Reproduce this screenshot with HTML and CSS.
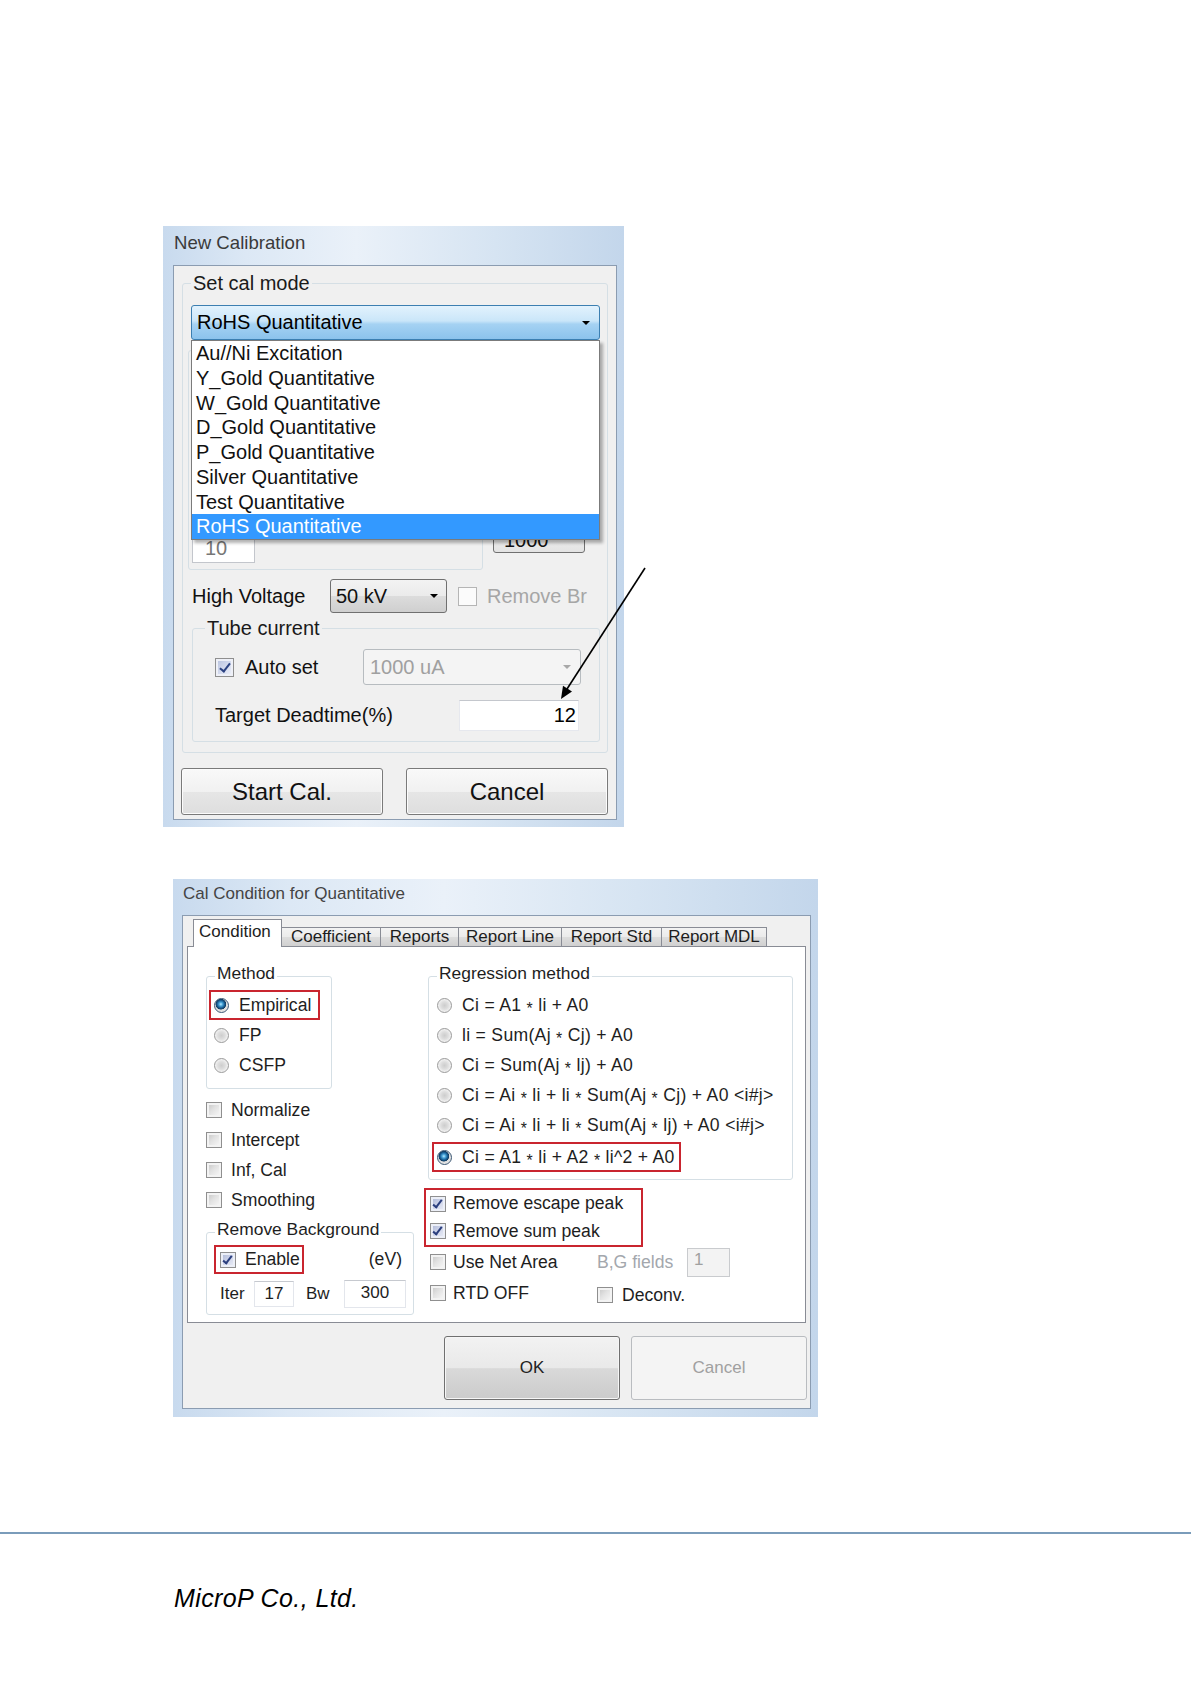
FILE: index.html
```html
<!DOCTYPE html>
<html lang="en">
<head>
<meta charset="utf-8">
<title>MicroP - Calibration</title>
<link rel="stylesheet" href="styles.css">
</head>
<body>
<main class="page">

  <div class="fig fig1">
    <section class="dlg dlg1">
      <div class="dlg-title dlg1-title">New Calibration</div>
      <div class="dlg-panel dlg1-panel">
        <fieldset class="grp grp-setcal">
          <legend>Set cal mode</legend>
          <div class="combo-wrap">
            <div class="combo combo-main"><span class="combo-text">RoHS Quantitative</span><i class="caret"></i></div>
            <ul class="droplist">
              <li>Au//Ni Excitation</li>
              <li>Y_Gold Quantitative</li>
              <li>W_Gold Quantitative</li>
              <li>D_Gold Quantitative</li>
              <li>P_Gold Quantitative</li>
              <li>Silver Quantitative</li>
              <li>Test Quantitative</li>
              <li class="sel">RoHS Quantitative</li>
            </ul>
          </div>
          <div class="hidden-row">
            <div class="grp-inner"><div class="txt10">10</div></div>
            <div class="btn-hidden">1000</div>
          </div>
          <div class="hv-row">
            <span class="hv-label">High Voltage</span>
            <div class="combo combo-hv"><span class="combo-text">50 kV</span><i class="caret"></i></div>
            <span class="chk1 dis"></span><span class="lbl-dis">Remove Br</span>
          </div>
          <fieldset class="grp grp-tube">
            <legend>Tube current</legend>
            <div class="auto-row">
              <span class="chk1 on"></span><span class="auto-label">Auto set</span>
              <div class="combo combo-dis"><span class="combo-text">1000 uA</span><i class="caret caret-dis"></i></div>
            </div>
            <div class="dead-row">
              <span>Target Deadtime(%)</span>
              <div class="txt-dead">12</div>
            </div>
          </fieldset>
        </fieldset>
        <div class="btn-row1">
          <div class="btn1">Start Cal.</div>
          <div class="btn1">Cancel</div>
        </div>
      </div>
    </section>
    <svg class="pointer" viewBox="0 0 500 500" width="500" height="500" aria-hidden="true">
      <line x1="482" y1="342" x2="404" y2="463" stroke="#000" stroke-width="1.6"/>
      <polygon points="398,473 409,465.6 400,459.8" fill="#000"/>
    </svg>
  </div>

  <div class="fig fig2">
    <section class="dlg dlg2">
      <div class="dlg-title dlg2-title">Cal Condition for Quantitative</div>
      <div class="dlg-panel dlg2-panel">
        <div class="tabs">
          <div class="tab active t-cond">Condition</div>
          <div class="tab t-coef">Coefficient</div>
          <div class="tab t-rep">Reports</div>
          <div class="tab t-line">Report Line</div>
          <div class="tab t-std">Report Std</div>
          <div class="tab t-mdl">Report MDL</div>
        </div>
        <div class="tabpage">
          <div class="col-left">
            <fieldset class="grp2 grp-method">
              <legend>Method</legend>
              <div class="opt red"><span class="radio on"></span><span class="t">Empirical</span></div>
              <div class="opt"><span class="radio"></span><span class="t">FP</span></div>
              <div class="opt"><span class="radio"></span><span class="t">CSFP</span></div>
            </fieldset>
            <div class="chk-list">
              <div class="chk-row"><span class="cb"></span><span class="t">Normalize</span></div>
              <div class="chk-row"><span class="cb"></span><span class="t">Intercept</span></div>
              <div class="chk-row"><span class="cb"></span><span class="t">Inf, Cal</span></div>
              <div class="chk-row"><span class="cb"></span><span class="t">Smoothing</span></div>
            </div>
            <fieldset class="grp2 grp-bg">
              <legend>Remove Background</legend>
              <div class="bg-row1">
                <div class="opt red opt-enable"><span class="cb on"></span><span class="t">Enable</span></div>
                <span class="t">(eV)</span>
              </div>
              <div class="bg-row2">
                <span class="lbl-iter">Iter</span>
                <div class="fld fld-iter">17</div>
                <span class="lbl-bw">Bw</span>
                <div class="fld fld-bw">300</div>
              </div>
            </fieldset>
          </div>
          <div class="col-right">
            <fieldset class="grp2 grp-reg">
              <legend>Regression method</legend>
              <div class="opt"><span class="radio"></span><span class="t">Ci = A1 <span class="ast">*</span> li + A0</span></div>
              <div class="opt"><span class="radio"></span><span class="t">li = Sum(Aj <span class="ast">*</span> Cj) + A0</span></div>
              <div class="opt"><span class="radio"></span><span class="t">Ci = Sum(Aj <span class="ast">*</span> lj) + A0</span></div>
              <div class="opt"><span class="radio"></span><span class="t">Ci = Ai <span class="ast">*</span> li + li <span class="ast">*</span> Sum(Aj <span class="ast">*</span> Cj) + A0 &lt;i#j&gt;</span></div>
              <div class="opt"><span class="radio"></span><span class="t">Ci = Ai <span class="ast">*</span> li + li <span class="ast">*</span> Sum(Aj <span class="ast">*</span> lj) + A0 &lt;i#j&gt;</span></div>
              <div class="opt red opt-last"><span class="radio on"></span><span class="t">Ci = A1 <span class="ast">*</span> li + A2 <span class="ast">*</span> li^2 + A0</span></div>
            </fieldset>
            <div class="redgroup">
              <div class="chk-row r27"><span class="cb on cb-r"></span><span class="t">Remove escape peak</span></div>
              <div class="chk-row r28"><span class="cb on cb-r"></span><span class="t">Remove sum peak</span></div>
            </div>
            <div class="opt-grid">
              <div class="chk-row r28"><span class="cb cb-r"></span><span class="t">Use Net Area</span></div>
              <div class="chk-row r28"><span class="lbl-bgf">B,G fields</span><div class="fld-dis">1</div></div>
              <div class="chk-row r28"><span class="cb cb-r"></span><span class="t">RTD OFF</span></div>
              <div class="chk-row r28 deconv"><span class="cb"></span><span class="t">Deconv.</span></div>
            </div>
          </div>
        </div>
        <div class="btn-row2">
          <div class="btn2 ok">OK</div>
          <div class="btn2 dis">Cancel</div>
        </div>
      </div>
    </section>
  </div>

  <div class="rule"></div>
  <p class="footer-text">MicroP Co., Ltd.</p>
</main>
</body>
</html>
```

FILE: styles.css
```css
html, body {
  margin: 0;
  padding: 0;
  background: #fff;
}
body {
  font-family: "Liberation Sans", Arial, sans-serif;
  color: #111;
}
.page {
  padding-top: 226px;
}

/* ---------- dialog frame ---------- */
.dlg {
  box-sizing: border-box;
  background: linear-gradient(to right, #c8daee 0%, #dce8f5 18%, #eaf1f9 42%, #d6e4f2 72%, #c3d6eb 100%);
  display: flex;
  flex-direction: column;
}
.dlg-title {
  box-sizing: border-box;
  color: #3a3a3a;
  white-space: nowrap;
}
.dlg-panel {
  box-sizing: border-box;
  border: 1px solid #8b9cb1;
  background: #f0f0f0;
}

/* ---------- dialog 1 ---------- */
.fig1 {
  position: relative;
  margin-left: 163px;
  width: 461px;
}
.dlg1 {
  width: 461px;
  height: 601px;
  font-size: 20px;
}
.dlg1-title {
  height: 39px;
  line-height: 33px;
  padding-left: 11px;
  font-size: 18.6px;
}
.dlg1-panel {
  margin: 0 7px 0 10px;
  height: 555px;
}

.grp {
  margin: 0;
  padding: 0;
  border: 1px solid #d5dfe5;
  border-radius: 3px;
  box-sizing: border-box;
  min-width: 0;
}
.grp > legend {
  padding: 0 2px;
  font-size: 20px;
  line-height: 24px;
  color: #1a1a1a;
}
.grp-setcal {
  margin: 5px 0 0 8px;
  width: 426px;
  padding-bottom: 10px;
}
.grp-setcal > legend {
  margin-left: 8px;
}

.combo {
  display: flex;
  align-items: center;
  box-sizing: border-box;
  border-radius: 3px;
  white-space: nowrap;
}
.combo-text {
  flex: 1;
}
.caret {
  display: block;
  width: 0;
  height: 0;
  border-left: 4px solid transparent;
  border-right: 4px solid transparent;
  border-top: 4px solid #000;
}
.caret-dis {
  border-top-color: #a8a8a8;
}

.combo-wrap {
  position: relative;
  margin: 10px 0 0 8px;
  width: 409px;
}
.combo-main {
  height: 35px;
  border: 1px solid #3c7fb1;
  background: linear-gradient(#e2f2fd 0%, #cae6f9 45%, #a5d2f3 55%, #8cc3ec 100%);
  padding: 0 9px 0 5px;
  color: #000;
}
.droplist {
  position: absolute;
  top: 100%;
  left: 0;
  z-index: 2;
  box-sizing: border-box;
  width: 409px;
  margin: 0;
  padding: 0;
  list-style: none;
  background: #fff;
  border: 1px solid #7b7b7b;
  box-shadow: 3px 3px 3px rgba(0, 0, 0, 0.3);
}
.droplist li {
  height: 24.75px;
  line-height: 24.75px;
  padding-left: 4px;
  color: #111;
}
.droplist li.sel {
  background: #3399ff;
  color: #fff;
}

.hidden-row {
  display: flex;
  margin: 10px 0 0 5px;
  height: 220px;
}
.grp-inner {
  box-sizing: border-box;
  width: 295px;
  height: 220px;
  border: 1px solid #d5dfe5;
  border-radius: 3px;
  display: flex;
  flex-direction: column;
  justify-content: flex-end;
  padding: 0 0 6px 3px;
}
.txt10 {
  box-sizing: border-box;
  width: 63px;
  height: 26px;
  border: 1px solid #c3c6cc;
  background: #fff;
  color: #777;
  line-height: 20px;
  padding-left: 12px;
}
.btn-hidden {
  box-sizing: border-box;
  align-self: flex-end;
  margin: 0 0 17px 10px;
  width: 92px;
  height: 26px;
  border: 1px solid #707070;
  border-radius: 3px;
  background: linear-gradient(#f4f4f4, #e3e3e3);
  line-height: 24px;
  padding-left: 10px;
}

.hv-row {
  display: flex;
  align-items: center;
  margin-top: 9px;
  height: 34px;
  padding-left: 9px;
  white-space: nowrap;
}
.hv-label {
  width: 138px;
}
.combo-hv {
  width: 117px;
  height: 34px;
  border: 1px solid #707070;
  background: linear-gradient(#f3f3f3, #ebebeb 50%, #dcdcdc 51%, #cfcfcf);
  padding: 0 8px 0 5px;
}
.chk1 {
  position: relative;
  flex: none;
  box-sizing: border-box;
  width: 19px;
  height: 19px;
  border: 1px solid #8f8f8f;
  background: linear-gradient(135deg, #d0d0d0, #eeeeee 55%, #fff);
  box-shadow: inset 0 0 0 2px #f3f3f3;
}
.hv-row .chk1 {
  margin-left: 11px;
}
.chk1.dis {
  border-color: #b5b5b5;
  background: #fbfbfb;
  box-shadow: none;
}
.chk1.on {
  background: linear-gradient(135deg, #b5c0dd, #d6dcef 55%, #f1f3fa);
  box-shadow: inset 0 0 0 2px #eef0f7;
}
.chk1.on::after {
  content: "";
  position: absolute;
  left: 6px;
  top: 2px;
  width: 4px;
  height: 9px;
  border: solid #2c4382;
  border-width: 0 2px 2px 0;
  transform: rotate(38deg);
}
.lbl-dis {
  margin-left: 10px;
  color: #a6a6a6;
}

.grp-tube {
  margin: 3px 0 0 9px;
  width: 408px;
  padding-bottom: 10px;
}
.grp-tube > legend {
  margin-left: 12px;
}
.auto-row {
  display: flex;
  align-items: center;
  height: 36px;
  margin-top: 9px;
  padding-left: 22px;
  white-space: nowrap;
}
.auto-label {
  margin-left: 11px;
}
.combo-dis {
  margin-left: auto;
  margin-right: 18px;
  width: 218px;
  height: 36px;
  border: 1px solid #b7bcc0;
  background: #f4f4f4;
  color: #a0a0a0;
  padding: 0 9px 0 6px;
}
.dead-row {
  display: flex;
  align-items: center;
  height: 31px;
  margin-top: 15px;
  padding-left: 22px;
  white-space: nowrap;
}
.txt-dead {
  box-sizing: border-box;
  margin-left: auto;
  margin-right: 20px;
  width: 120px;
  height: 31px;
  background: #fff;
  border: 1px solid #e6e8ee;
  border-top-color: #c4c7cd;
  text-align: right;
  padding-right: 2px;
  line-height: 29px;
  color: #000;
}

.btn-row1 {
  display: flex;
  gap: 23px;
  margin: 15px 0 0 7px;
}
.btn1 {
  box-sizing: border-box;
  width: 202px;
  height: 47px;
  border: 1px solid #7a7a7a;
  border-radius: 3px;
  background: linear-gradient(#f9f9f9, #f1f1f1 50%, #e6e6e6 51%, #dedede);
  box-shadow: inset 0 0 0 1px #fcfcfc;
  font-size: 24px;
  line-height: 45px;
  text-align: center;
  color: #111;
}

.pointer {
  position: absolute;
  left: 0;
  top: 0;
  overflow: visible;
  pointer-events: none;
}

/* ---------- dialog 2 ---------- */
.fig2 {
  margin: 52px 0 0 173px;
  width: 645px;
}
.dlg2 {
  width: 645px;
  height: 538px;
  font-size: 17px;
  color: #1e1e1e;
}
.dlg2-title {
  height: 36px;
  line-height: 30px;
  padding-left: 10px;
  font-size: 17px;
  color: #444;
}
.dlg2-panel {
  margin: 0 7px 0 9px;
  height: 494px;
  padding-top: 3px;
}

.tabs {
  display: flex;
  align-items: flex-end;
  height: 27px;
  padding-left: 10px;
}
.tab {
  box-sizing: border-box;
  height: 19px;
  margin-left: -1px;
  border: 1px solid #898c95;
  border-bottom: none;
  background: linear-gradient(#f3f3f3, #ebebeb 50%, #dddddd 51%, #d0d0d0);
  font-size: 17px;
  line-height: 17px;
  text-align: center;
  white-space: nowrap;
}
.tab.active {
  position: relative;
  z-index: 1;
  height: 28px;
  margin-left: 0;
  margin-bottom: -1px;
  background: #fff;
  line-height: 24px;
  text-align: left;
  padding-left: 5px;
}
.t-cond { width: 89px; }
.t-coef { width: 100px; }
.t-rep { width: 79px; }
.t-line { width: 104px; }
.t-std { width: 101px; }
.t-mdl { width: 106px; }

.tabpage {
  box-sizing: border-box;
  margin-left: 4px;
  width: 619px;
  height: 377px;
  border: 1px solid #898c95;
  background: #fff;
  display: grid;
  grid-template-columns: 208px 365px;
  column-gap: 14px;
  align-items: start;
  padding: 16px 0 0 18px;
}
.t {
  font-size: 17.6px;
  white-space: pre;
}

.grp2 {
  margin: 0;
  padding: 0;
  border: 1px solid #d5dfe5;
  border-radius: 3px;
  box-sizing: border-box;
  min-width: 0;
}
.grp2 > legend {
  margin-left: 8px;
  padding: 0 2px 7px;
  font-size: 17.4px;
  line-height: 20px;
}
.opt {
  display: flex;
  align-items: center;
  box-sizing: border-box;
  height: 30px;
  border: 2px solid transparent;
  padding-left: 3px;
  white-space: nowrap;
}
.opt.red {
  border-color: #c9252f;
}
.radio {
  flex: none;
  box-sizing: border-box;
  width: 15px;
  height: 15px;
  margin-right: 10px;
  border-radius: 50%;
  border: 1px solid #9a9a9a;
  background: radial-gradient(circle, #cdcdcd 0%, #dedede 40%, #f2f2f2 70%, #fff 100%);
}
.radio.on {
  border-color: #3a5673;
  background: radial-gradient(circle at 45% 40%, #bdeaff 0, #4aa6da 1.8px, #1b6197 3.6px, #0f3a60 5px, #dcdcdc 5.6px, #f7f7f7 100%);
}
.grp-reg .t {
  letter-spacing: 0.3px;
}
.ast {
  position: relative;
  top: 0.22em;
  font-size: 0.9em;
}

.grp-method {
  width: 126px;
  padding-bottom: 8px;
}
.grp-method .opt {
  margin-left: 2px;
  width: 111px;
}

.chk-list {
  margin-top: 6px;
}
.chk-row {
  display: flex;
  align-items: center;
  height: 30px;
  white-space: nowrap;
}
.cb {
  position: relative;
  flex: none;
  box-sizing: border-box;
  width: 16px;
  height: 16px;
  margin-right: 9px;
  border: 1px solid #8f8f8f;
  background: linear-gradient(135deg, #c4c4c4 0%, #e2e2e2 45%, #fbfbfb 100%);
  box-shadow: inset 0 0 0 2px #f3f3f3;
}
.cb.on {
  background: linear-gradient(135deg, #a9b3d3 0%, #cfd5ea 50%, #eff1f8 100%);
  box-shadow: inset 0 0 0 2px #eceff7;
}
.cb.on::after {
  content: "";
  position: absolute;
  left: 4px;
  top: 1px;
  width: 3px;
  height: 8px;
  border: solid #2b3f7e;
  border-width: 0 2px 2px 0;
  transform: rotate(38deg);
}
.cb-r {
  margin-right: 7px;
}

.grp-bg {
  margin-top: 4px;
  width: 208px;
  padding-bottom: 7px;
}
.grp-bg > legend {
  padding-bottom: 6px;
}
.bg-row1 {
  display: flex;
  align-items: center;
  justify-content: space-between;
  height: 29px;
  padding-right: 11px;
}
.opt-enable {
  margin-left: 7px;
  width: 90px;
  height: 29px;
  padding-left: 4px;
}
.bg-row2 {
  display: flex;
  align-items: center;
  height: 27px;
  margin-top: 6px;
  padding-left: 13px;
}
.lbl-iter {
  width: 34px;
}
.lbl-bw {
  width: 38px;
  margin-left: 12px;
}
.fld {
  box-sizing: border-box;
  height: 26px;
  border: 1px solid #e3e6ec;
  border-top-color: #c6c9cf;
  background: #fff;
  text-align: center;
  line-height: 24px;
}
.fld-iter {
  width: 40px;
}
.fld-bw {
  width: 62px;
  height: 28px;
  line-height: 24px;
}

.grp-reg {
  width: 365px;
  padding-bottom: 7px;
}
.grp-reg .opt {
  margin-left: 3px;
}
.grp-reg .opt-last {
  margin-top: 2px;
  width: 249px;
}

.redgroup {
  box-sizing: border-box;
  margin: 8px 0 0 -4px;
  width: 219px;
  border: 2px solid #c9252f;
  padding-left: 4px;
}
.r27 { height: 27px; }
.r28 { height: 28px; }

.opt-grid {
  display: grid;
  grid-template-columns: 167px auto;
  row-gap: 3px;
  margin: 1px 0 0 2px;
}
.lbl-bgf {
  width: 90px;
  color: #a3a7ad;
  font-size: 17.6px;
}
.fld-dis {
  box-sizing: border-box;
  width: 43px;
  height: 29px;
  border: 1px solid #c9cbce;
  background: #f3f3f3;
  color: #a0a0a0;
  padding-left: 6px;
  line-height: 22px;
}
.deconv {
  padding-top: 4px;
  box-sizing: border-box;
}

.btn-row2 {
  display: flex;
  justify-content: flex-end;
  gap: 11px;
  margin: 13px 3px 0 0;
}
.btn2 {
  box-sizing: border-box;
  width: 176px;
  height: 64px;
  border-radius: 3px;
  display: flex;
  align-items: center;
  justify-content: center;
  font-size: 17px;
}
.btn2.ok {
  border: 1px solid #707070;
  background: linear-gradient(#f2f2f2, #e9e9e9 50%, #d9d9d9 51%, #cbcbcb);
  box-shadow: inset 0 0 0 1px #f6f6f6;
  color: #222;
}
.btn2.dis {
  border: 1px solid #b9bcc0;
  background: #f4f4f4;
  color: #a0a0a0;
}

/* ---------- footer ---------- */
.rule {
  height: 2px;
  margin-top: 115px;
  background: #7a9cba;
}
.footer-text {
  margin: 50px 0 0 174px;
  font-style: italic;
  font-size: 25px;
  letter-spacing: 0.4px;
  line-height: 28px;
  color: #000;
}
```
